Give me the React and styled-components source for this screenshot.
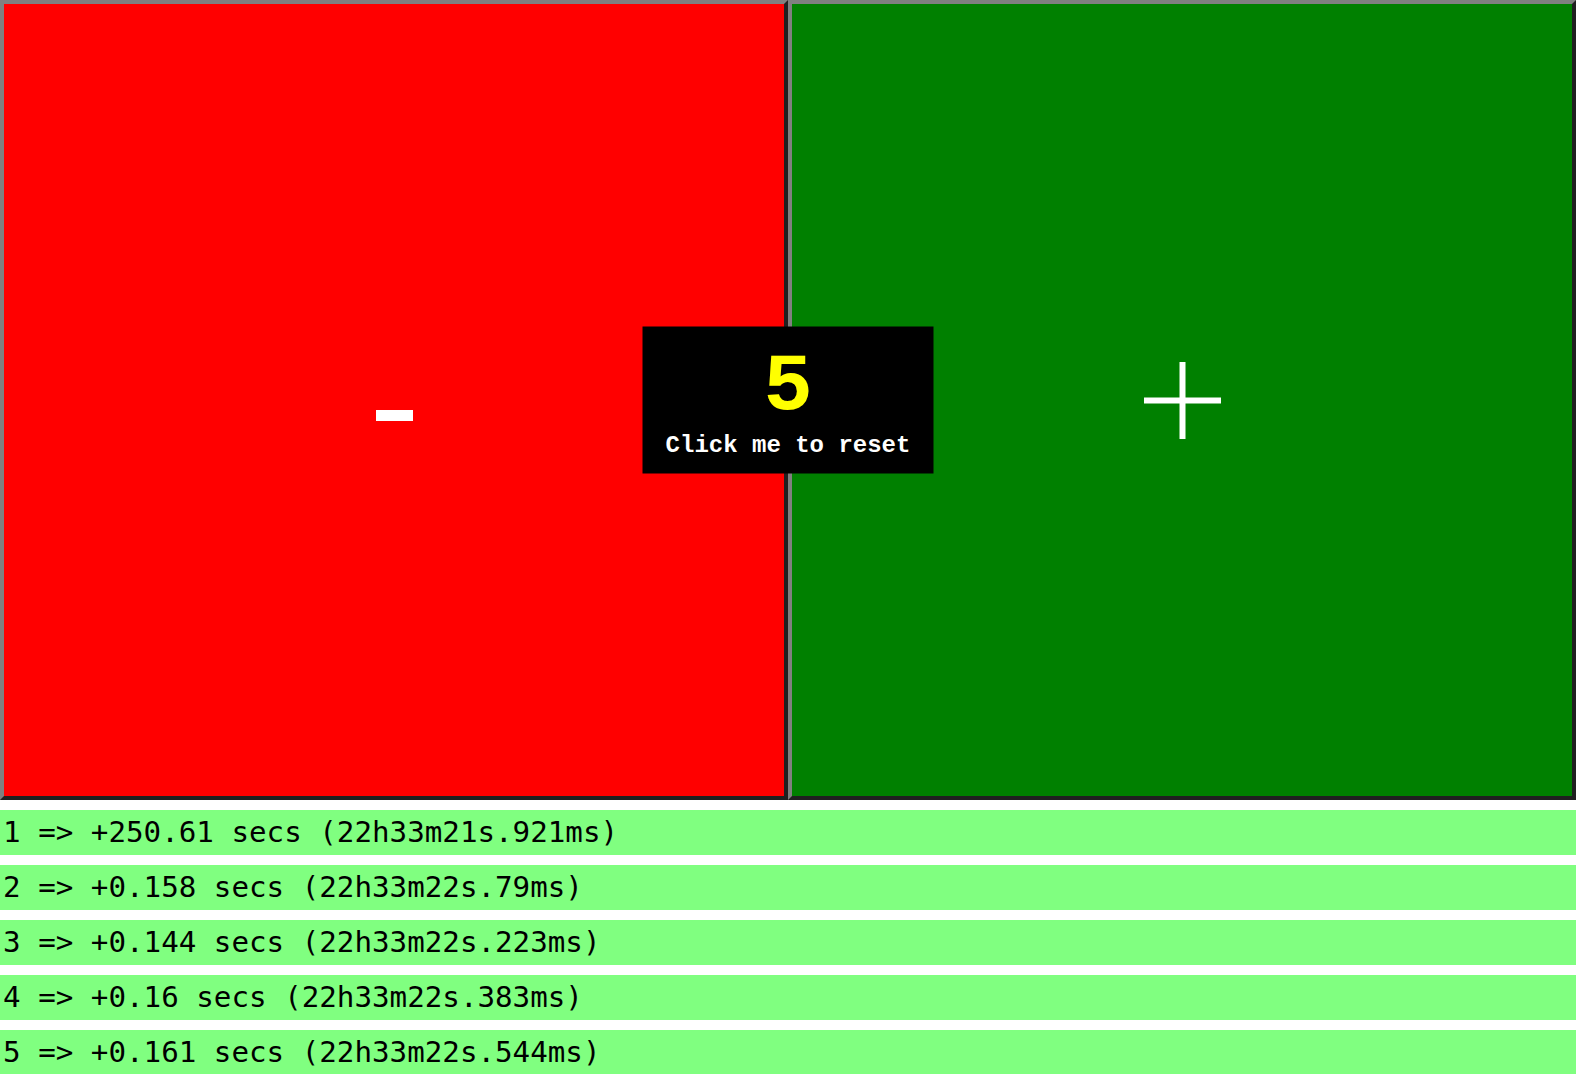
import React from "react";
import styled, { createGlobalStyle } from "styled-components";

const Global = createGlobalStyle`
  html, body { margin: 0; padding: 0; background: #ffffff; }
  body { font-family: "DejaVu Sans Mono", monospace; }
`;

const Board = styled.div`
  position: relative;
  display: flex;
  height: 800px;
`;

const Pad = styled.div`
  flex: 1;
  box-sizing: border-box;
  border: 4px solid;
  border-color: #808080 #202020 #202020 #808080;
  background: ${(p) => p.$bg};
  display: flex;
  align-items: center;
  justify-content: center;
  cursor: pointer;
`;

const MinusMark = styled.svg`
  display: block;
  margin-top: 30px;
`;

const PlusMark = styled.svg`
  display: block;
`;

const Counter = styled.div`
  position: absolute;
  top: 50%;
  left: 50%;
  transform: translate(-50%, -50%);
  width: 291px;
  height: 147px;
  box-sizing: border-box;
  background: #000000;
  display: flex;
  flex-direction: column;
  align-items: center;
  padding-top: 26px;
  cursor: pointer;
`;

const Count = styled.div`
  font-family: "Liberation Mono", "Courier New", monospace;
  font-weight: bold;
  font-size: 82px;
  line-height: 70px;
  color: #ffff00;
`;

const ResetLabel = styled.div`
  margin-top: 9px;
  font-family: "Liberation Mono", "Courier New", monospace;
  font-weight: bold;
  font-size: 24px;
  line-height: 28px;
  color: #ffffff;
`;

const Log = styled.div`
  display: flex;
  flex-direction: column;
  gap: 10px;
  padding-top: 10px;
`;

const LogRow = styled.div`
  height: 45px;
  line-height: 45px;
  background: #80ff80;
  color: #000000;
  font-family: "DejaVu Sans Mono", monospace;
  font-size: 29.2px;
  padding-left: 3px;
  white-space: pre;
`;

const entries = [
  "1 => +250.61 secs (22h33m21s.921ms)",
  "2 => +0.158 secs (22h33m22s.79ms)",
  "3 => +0.144 secs (22h33m22s.223ms)",
  "4 => +0.16 secs (22h33m22s.383ms)",
  "5 => +0.161 secs (22h33m22s.544ms)",
];

export default function App() {
  return (
    <>
      <Global />
      <Board>
        <Pad $bg="#ff0000">
          <MinusMark width="37" height="11" viewBox="0 0 37 11">
            <rect x="0" y="0" width="37" height="11" fill="#ffffff" />
          </MinusMark>
        </Pad>
        <Pad $bg="#008000">
          <PlusMark width="77" height="77" viewBox="0 0 77 77">
            <rect x="35.5" y="0" width="6" height="77" fill="#ffffff" />
            <rect x="0" y="35.5" width="77" height="6" fill="#ffffff" />
          </PlusMark>
        </Pad>
        <Counter>
          <Count>5</Count>
          <ResetLabel>Click me to reset</ResetLabel>
        </Counter>
      </Board>
      <Log>
        {entries.map((e) => (
          <LogRow key={e}>{e}</LogRow>
        ))}
      </Log>
    </>
  );
}
